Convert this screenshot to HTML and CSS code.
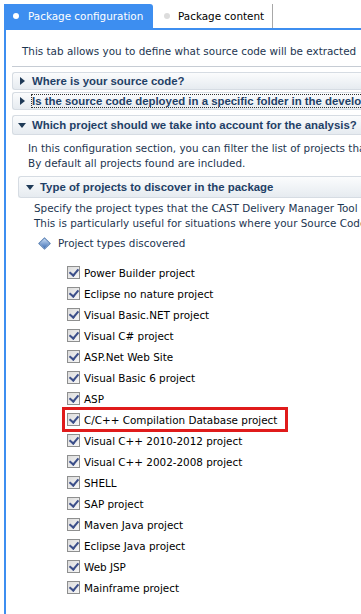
FILE: index.html
```html
<!DOCTYPE html>
<html lang="en">
<head>
    <meta charset="UTF-8">
    <meta name="viewport" content="width=device-width, initial-scale=1.0">
    <title>Package configuration</title>
    <link rel="stylesheet" href="styles.css">
</head>
<body>
    <div class="tabs">
        <div class="tab active"><span class="dot"></span>Package configuration</div>
        <div class="tab"><span class="dot"></span>Package content</div>
    </div>
    <div class="panel">
        <p class="intro">This tab allows you to define what source code will be extracted</p>
        <div class="section-head"><span class="arrow right"></span>Where is your source code?</div>
        <div class="section-head"><span class="arrow right"></span><span class="focus">Is the source code deployed in a specific folder in the development environment?</span></div>
        <div class="section-head open"><span class="arrow down"></span>Which project should we take into account for the analysis?</div>
        <div class="section-body">
            <p class="desc">In this configuration section, you can filter the list of projects that will be discovered.<br>By default all projects found are included.</p>
            <div class="section-head sub"><span class="arrow down"></span>Type of projects to discover in the package</div>
            <div class="sub-body">
                <p class="desc">Specify the project types that the CAST Delivery Manager Tool will discover.<br>This is particularly useful for situations where your Source Code contains several project types.</p>
                <div class="tree-root"><span class="diamond"></span>Project types discovered</div>
                <ul class="types">
                    <li><span class="check"></span>Power Builder project</li>
                    <li><span class="check"></span>Eclipse no nature project</li>
                    <li><span class="check"></span>Visual Basic.NET project</li>
                    <li><span class="check"></span>Visual C# project</li>
                    <li><span class="check"></span>ASP.Net Web Site</li>
                    <li><span class="check"></span>Visual Basic 6 project</li>
                    <li><span class="check"></span>ASP</li>
                    <li class="highlight"><span class="check"></span>C/C++ Compilation Database project</li>
                    <li><span class="check"></span>Visual C++ 2010-2012 project</li>
                    <li><span class="check"></span>Visual C++ 2002-2008 project</li>
                    <li><span class="check"></span>SHELL</li>
                    <li><span class="check"></span>SAP project</li>
                    <li><span class="check"></span>Maven Java project</li>
                    <li><span class="check"></span>Eclipse Java project</li>
                    <li><span class="check"></span>Web JSP</li>
                    <li><span class="check"></span>Mainframe project</li>
                </ul>
            </div>
        </div>
    </div>
</body>
</html>
```

FILE: styles.css
```css
* {
    margin: 0;
    padding: 0;
    box-sizing: border-box;
}
body {
    font-family: "DejaVu Sans", sans-serif;
    font-size: 10.4px;
    background-color: #fff;
    color: #000;
    width: 361px;
    height: 614px;
    overflow: hidden;
}
.tabs {
    display: flex;
    padding: 4px 0 0 4px;
    height: 28px;
}
.tab {
    display: flex;
    align-items: center;
    height: 24px;
    padding: 0 8px 0 11px;
    white-space: nowrap;
    border-right: 1px solid #a8a8a8;
}
.tab .dot {
    width: 6px;
    height: 6px;
    border-radius: 50%;
    background-color: #dcdcdc;
    margin-right: 8px;
}
.tab.active {
    background-color: #3d8ef0;
    color: #fff;
    border-right: none;
    border-radius: 0 3px 0 0;
    width: 149px;
    padding-left: 9px;
}
.tab.active .dot {
    background-color: #fff;
    margin-right: 9px;
}
.panel {
    margin-left: 4px;
    border-left: 2px solid #3d8ef0;
    border-top: 2px solid #3d8ef0;
    padding-left: 6px;
    height: 600px;
    white-space: nowrap;
    overflow: hidden;
    color: #1c3550;
}
.intro {
    padding: 15px 0 9px 10px;
    border-bottom: 1px solid #c6ccd4;
    margin-bottom: 5px;
}
.section-head {
    display: flex;
    align-items: center;
    height: 18px;
    margin-bottom: 2px;
    padding-left: 7px;
    border: 1px solid #d6dce3;
    border-right: none;
    border-radius: 3px 0 0 3px;
    background: linear-gradient(#fbfcfd, #e6ebf0);
    font-family: "Liberation Sans", Arial, sans-serif;
    font-weight: bold;
    font-size: 11.4px;
    color: #1f4066;
}
.section-head.open {
    margin-top: 5px;
    height: 20px;
    padding-left: 5px;
}
.focus {
    outline: 1px dotted #333;
}
.arrow {
    flex: none;
    width: 0;
    height: 0;
}
.arrow.right {
    border-top: 4px solid transparent;
    border-bottom: 4px solid transparent;
    border-left: 5px solid #1f3a57;
    margin-right: 7px;
}
.arrow.down {
    border-left: 4px solid transparent;
    border-right: 4px solid transparent;
    border-top: 5px solid #1f3a57;
    margin-right: 6px;
}
.section-body {
    padding-left: 6px;
}
.desc {
    padding: 4px 0 5px 10px;
    line-height: 15px;
}
.section-head.sub {
    height: 22px;
}
.sub-body {
    padding-left: 6px;
}
.sub-body .desc {
    padding-top: 1px;
    padding-bottom: 2px;
}
.tree-root {
    display: flex;
    align-items: center;
    padding: 0 0 0 16px;
    height: 20px;
}
.diamond {
    width: 9px;
    height: 9px;
    margin-right: 9px;
    transform: rotate(45deg);
    background: linear-gradient(135deg, #c7dcf5, #3f6fb5);
    border: 1px solid #4e78b0;
}
.types {
    list-style: none;
    padding: 9px 0 0 38px;
    color: #000;
}
.types li {
    display: flex;
    align-items: center;
    height: 21px;
    width: 226px;
    padding-left: 5px;
}
.types li.highlight {
    border: 3px solid #e01b1b;
    padding-left: 2px;
    height: 25px;
    margin: -2px 0 -2px;
}
.check {
    flex: none;
    width: 13px;
    height: 13px;
    margin-right: 4px;
    border: 1px solid #8e8f8f;
    background: linear-gradient(135deg, #dcdcdc, #f6f6f6);
    position: relative;
}
.check::after {
    content: "";
    position: absolute;
    left: 3px;
    top: 0px;
    width: 4px;
    height: 7px;
    border-right: 2px solid #3c4f8a;
    border-bottom: 2px solid #3c4f8a;
    transform: rotate(40deg);
}
```
